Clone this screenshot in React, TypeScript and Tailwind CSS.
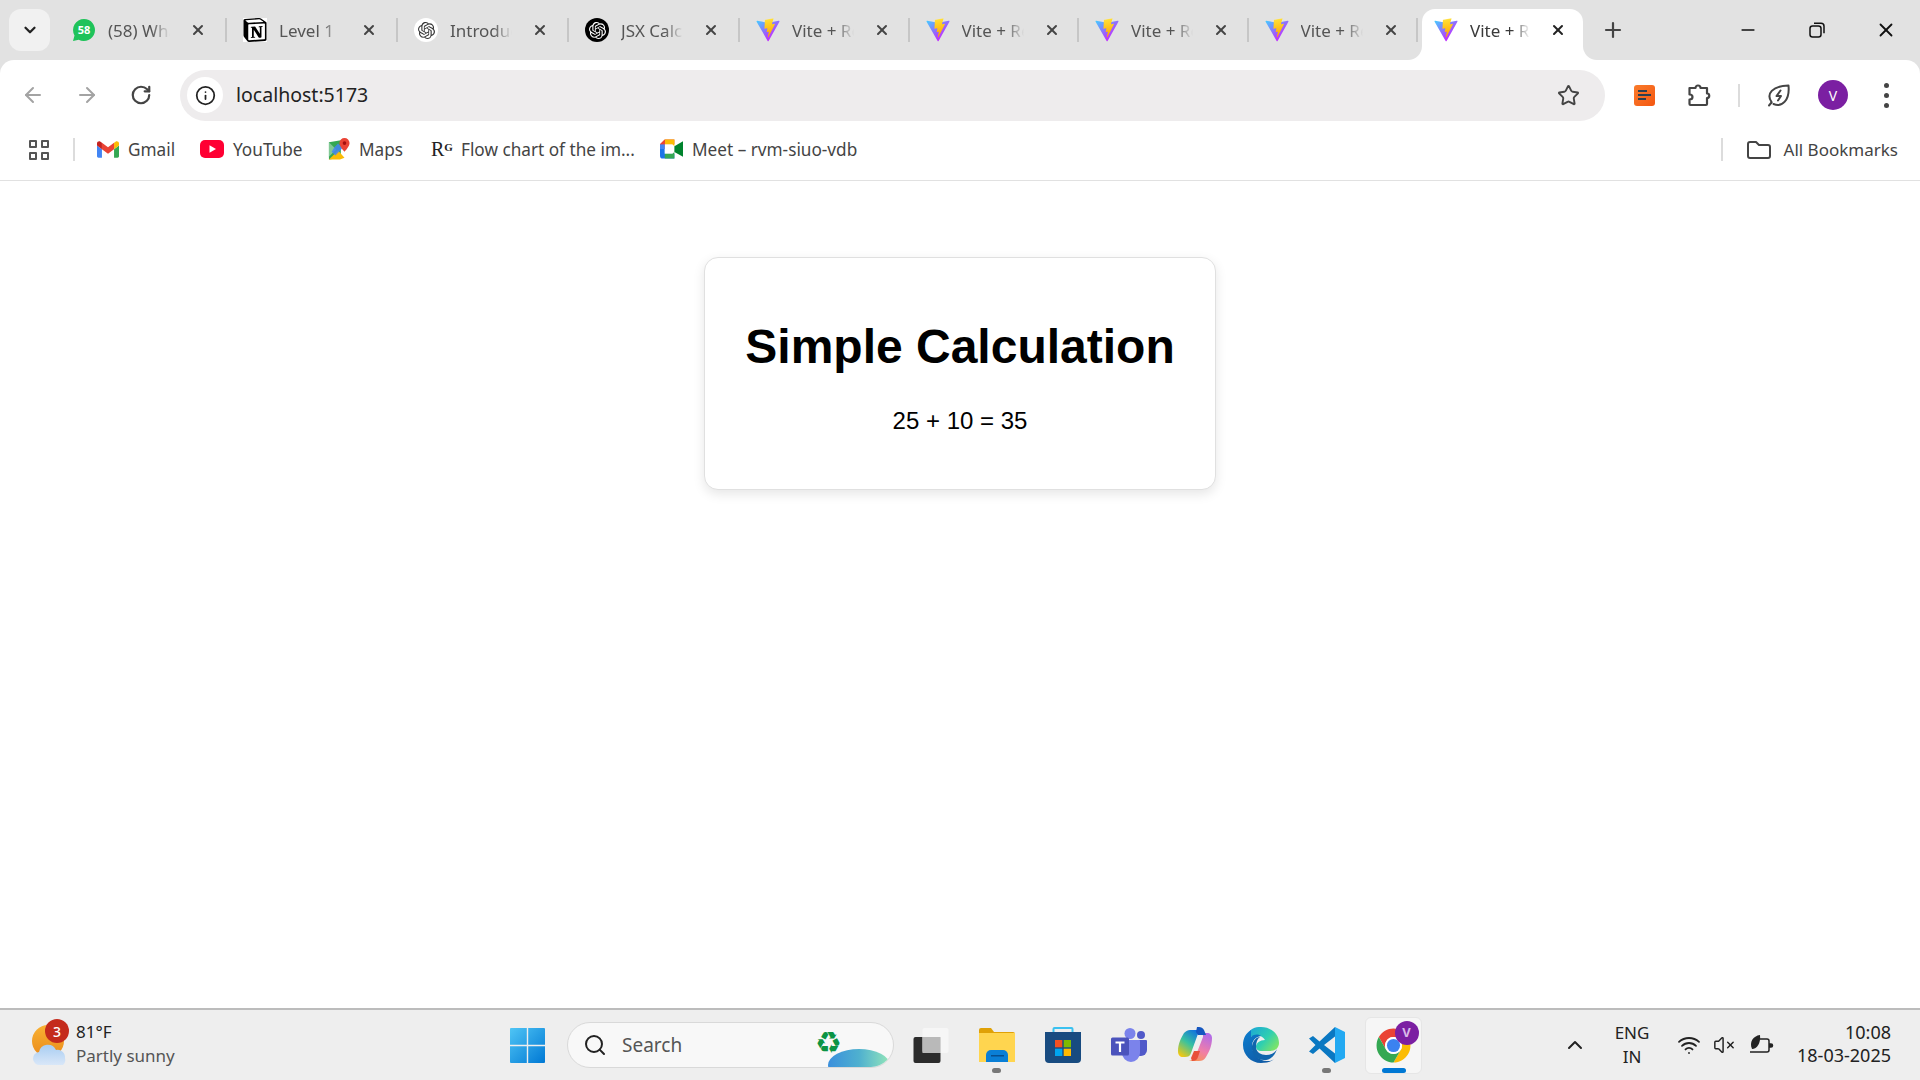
import { ArrowLeft, ArrowRight, ChevronDown, ChevronUp, Info, Minus, Plus, RotateCw, Search, Star, VolumeX, Wifi, X } from "lucide-react";
import { SiNotion, SiOpenai } from "react-icons/si";

function ViteIcon() {
  return (
    <svg viewBox="0 0 410 404" className="w-6 h-6 shrink-0" fill="none">
      <defs>
        <linearGradient id="vite-a" x1="6" y1="33" x2="235" y2="344" gradientUnits="userSpaceOnUse">
          <stop stopColor="#41D1FF" />
          <stop offset="1" stopColor="#BD34FE" />
        </linearGradient>
        <linearGradient id="vite-b" x1="194.65" y1="8.82" x2="236.08" y2="292.99" gradientUnits="userSpaceOnUse">
          <stop stopColor="#FFEA83" />
          <stop offset="0.083" stopColor="#FFDD35" />
          <stop offset="1" stopColor="#FFA800" />
        </linearGradient>
      </defs>
      <path d="M399.641 59.5246L215.643 388.545C211.844 395.338 202.084 395.378 198.228 388.618L10.5817 59.5563C6.38087 52.1896 12.6802 43.2665 21.0281 44.7586L205.223 77.6824C206.398 77.8924 207.601 77.8904 208.776 77.6763L389.119 44.8058C397.439 43.2894 403.768 52.1434 399.641 59.5246Z" fill="url(#vite-a)" />
      <path d="M292.965 1.5744L156.801 28.2552C154.563 28.6937 152.906 30.5903 152.771 32.8664L144.395 174.33C144.198 177.662 147.258 180.248 150.51 179.498L188.42 170.749C191.967 169.931 195.172 173.055 194.443 176.622L183.18 231.775C182.422 235.487 185.907 238.661 189.532 237.56L212.947 230.446C216.577 229.344 220.065 232.527 219.297 236.242L201.398 322.875C200.278 328.294 207.486 331.249 210.492 326.603L212.5 323.5L323.454 102.072C325.312 98.3645 322.108 94.137 318.036 94.9228L279.014 102.454C275.347 103.161 272.227 99.746 273.262 96.1583L298.731 7.86689C299.767 4.27314 296.636 0.855181 292.965 1.5744Z" fill="url(#vite-b)" />
    </svg>
  );
}

function WhatsAppIcon() {
  return (
    <div className="relative w-6 h-6 shrink-0">
      <svg viewBox="0 0 24 24" className="w-6 h-6">
        <path d="M12 1a11 11 0 1 1-5.2 20.7L1 23l1.500-5.500A11 11 0 0 1 12 1z" fill="#1fc35a" />
      </svg>
      <span className="absolute inset-0 flex items-center justify-center text-[11px] font-bold text-white">58</span>
    </div>
  );
}

function OpenAiIcon({ dark }: { dark?: boolean }) {
  return (
    <div className={dark ? "w-6 h-6 shrink-0 rounded-full bg-black text-white flex items-center justify-center" : "w-6 h-6 shrink-0 rounded-full bg-white text-[#333] flex items-center justify-center"}>
      <SiOpenai size={17} />
    </div>
  );
}

function Tab({ icon, title, className }: { icon: React.ReactNode; title: string; className: string }) {
  return (
    <div className={"flex items-center h-[42px] pl-4 " + className}>
      {icon}
      <span className="ml-3 pt-[2px] w-[62px] overflow-hidden whitespace-nowrap text-[17px] text-[#555] [mask-image:linear-gradient(to_right,black_70%,transparent)]">{title}</span>
      <X size={16} strokeWidth={3} className="ml-[20px] text-[#444]" />
      <div className="ml-auto w-[2px] h-6 bg-[#c6c6c6]" />
    </div>
  );
}

function ActiveTab() {
  return (
    <div className="relative flex items-center w-[161px] h-[51px] ml-1 pl-3 pb-[9px] bg-white rounded-t-[13px]">
      <div className="absolute -left-[14px] bottom-0 w-[14px] h-[14px] bg-white">
        <div className="w-full h-full bg-[#e2e2e2] rounded-br-[14px]" />
      </div>
      <div className="absolute -right-[14px] bottom-0 w-[14px] h-[14px] bg-white">
        <div className="w-full h-full bg-[#e2e2e2] rounded-bl-[14px]" />
      </div>
      <ViteIcon />
      <span className="ml-3 pt-[2px] w-[60px] overflow-hidden whitespace-nowrap text-[17px] text-[#3a3a3a] [mask-image:linear-gradient(to_right,black_70%,transparent)]">Vite + React</span>
      <X size={16} strokeWidth={3} className="ml-[20px] text-[#222]" />
    </div>
  );
}

function Bookmark({ icon, label, className, iconClassName }: { icon: React.ReactNode; label: string; className: string; iconClassName: string }) {
  return (
    <div className={"flex items-center shrink-0 " + className}>
      <div className={"shrink-0 flex items-center " + iconClassName}>{icon}</div>
      <span className="text-[17.2px] text-[#444] whitespace-nowrap">{label}</span>
    </div>
  );
}

function GmailIcon() {
  return (
    <svg viewBox="0 0 24 18" className="w-[22px] h-[17px]">
      <path d="M1.6 18h3.8V8.7L0 4.6v11.8c0 .9.7 1.6 1.6 1.6z" fill="#4285f4" />
      <path d="M18.6 18h3.8c.9 0 1.6-.7 1.6-1.6V4.6l-5.4 4.1z" fill="#34a853" />
      <path d="M18.6 1.7v7L24 4.6V2.4c0-2-2.3-3.1-3.8-1.9z" fill="#fbbc04" />
      <path d="M5.4 8.7v-7L12 6.6l6.6-4.9v7L12 13.6z" fill="#ea4335" />
      <path d="M0 2.4v2.2l5.4 4.1v-7L3.8.5C2.3-.7 0 .4 0 2.4z" fill="#c5221f" />
    </svg>
  );
}

function YouTubeIcon() {
  return (
    <svg viewBox="0 0 24 18" className="w-6 h-[18px]">
      <rect width="24" height="18" rx="5" fill="#ff0033" />
      <path d="M9.5 5.2l6.5 3.8-6.5 3.8z" fill="#fff" />
    </svg>
  );
}

function MapsIcon() {
  return (
    <svg viewBox="0 0 24 24" className="w-[22px] h-[22px]">
      <path d="M1 4.500l13-2v19l-13 2z" fill="#34a853" />
      <path d="M1 23.500l10-10 7 8-5 2z" fill="#fbbc04" />
      <path d="M1 4.500l8 8-8 8z" fill="#81c995" />
      <path d="M7 10l4-4 5 5-8 8-4-4z" fill="#4285f4" opacity="0.85" />
      <path d="M18 0a5.500 5.500 0 0 1 5.500 5.500c0 4-5.500 9.500-5.500 9.500s-5.500-5.500-5.500-9.500A5.500 5.500 0 0 1 18 0z" fill="#ea4335" />
      <circle cx="18" cy="5.500" r="2" fill="#a50e0e" />
    </svg>
  );
}

function MeetIcon() {
  return (
    <svg viewBox="0 0 24 20" className="w-[23px] h-[20px]">
      <path d="M5 0h10v5H5v5H0V5z" fill="#ea4335" />
      <path d="M0 10h5v5h10v5H3a3 3 0 0 1-3-3z" fill="#1a73e8" />
      <path d="M5 5h8l2 2v6l-2 2H5z" fill="#fff" />
      <path d="M15 0v7l-2-2H5V0z" fill="#fbbc04" />
      <path d="M15 13v7H5v-5h8z" fill="#34a853" />
      <path d="M15 7l9-5v16l-9-5z" fill="#00832d" />
      <path d="M0 5h5v5H0z" fill="#4285f4" />
      <path d="M5 0L0 5h5z" fill="#ea4335" />
    </svg>
  );
}

function ChromeIcon() {
  return (
    <svg viewBox="0 0 48 48" className="w-[37px] h-[37px]">
      <path d="M4.95 13A22 22 0 0 1 43.05 13H24A11 11 0 0 0 14.47 29.5z" fill="#ea4335" />
      <path d="M43.05 13A22 22 0 0 1 24 46L33.53 29.5A11 11 0 0 0 24 13z" fill="#fbbc04" />
      <path d="M24 46A22 22 0 0 1 4.95 13L14.47 29.5A11 11 0 0 0 33.53 29.5z" fill="#34a853" />
      <circle cx="24" cy="24" r="11" fill="#fff" />
      <circle cx="24" cy="24" r="8.500" fill="#3b82f0" />
    </svg>
  );
}

function WindowsLogo() {
  return (
    <svg viewBox="0 0 35 35" className="w-[35px] h-[35px] shrink-0">
      <defs>
        <linearGradient id="win" x1="0" y1="0" x2="1" y2="1">
          <stop stopColor="#4fc5f5" />
          <stop offset="1" stopColor="#0078d4" />
        </linearGradient>
      </defs>
      <path d="M1 0h15.800v16.800H0V1a1 1 0 0 1 1-1zM18.200 0H34a1 1 0 0 1 1 1v15.800H18.200zM0 18.200h16.800V35H1a1 1 0 0 1-1-1zM18.200 18.200H35V34a1 1 0 0 1-1 1H18.200z" fill="url(#win)" />
    </svg>
  );
}

function StackIcon() {
  return (
    <svg viewBox="0 0 36 36" className="w-9 h-9">
      <rect x="0.500" y="10" width="27" height="26" rx="2" fill="#2b2b2b" />
      <rect x="9.500" y="1" width="26" height="25" rx="2" fill="#f6f6f6" opacity="0.9" />
      <rect x="9.500" y="10" width="18" height="16" fill="#b9b9b9" />
    </svg>
  );
}

function FolderIcon() {
  return (
    <svg viewBox="0 0 36 34" className="w-9 h-[34px]">
      <path d="M0 2a2 2 0 0 1 2-2h10l3 4h19a2 2 0 0 1 2 2v4H0z" fill="#e0a106" />
      <path d="M0 5h36v29H0z" fill="#ffd54f" />
      <path d="M7 33v-6a5 5 0 0 1 5-5h12a5 5 0 0 1 5 5v7H7z" fill="#0a7fd6" />
      <rect x="12" y="27" width="13" height="1.500" fill="#064f8f" />
    </svg>
  );
}

function StoreIcon() {
  return (
    <svg viewBox="0 0 36 36" className="w-9 h-9">
      <path d="M8.500 7V2a1 1 0 0 1 1-1h17a1 1 0 0 1 1 1v5" fill="none" stroke="#3ac1f0" strokeWidth="2" />
      <path d="M0 5h36v27a4 4 0 0 1-4 4H4a4 4 0 0 1-4-4z" fill="#184b80" />
      <rect x="10" y="13" width="7.300" height="7.300" fill="#f25022" />
      <rect x="18.700" y="13" width="7.300" height="7.300" fill="#7fba00" />
      <rect x="10" y="21.700" width="7.300" height="7.300" fill="#00a4ef" />
      <rect x="18.700" y="21.700" width="7.300" height="7.300" fill="#ffb900" />
    </svg>
  );
}

function TeamsIcon() {
  return (
    <svg viewBox="0 0 36 34" className="w-9 h-[34px]">
      <circle cx="19" cy="5.500" r="5.500" fill="#7b83eb" />
      <circle cx="30" cy="7" r="4" fill="#5059c9" />
      <path d="M25 12h10a1 1 0 0 1 1 1v9a6 6 0 0 1-6 6h-4z" fill="#5059c9" />
      <path d="M10 12h18a1 1 0 0 1 1 1v12a9 9 0 0 1-18 0z" fill="#7b83eb" />
      <rect x="0" y="9.500" width="18" height="18" rx="1.500" fill="#4b53bc" />
      <path d="M4.500 13.500h9v2h-3.400v8.500H7.900v-8.500H4.500z" fill="#fff" />
    </svg>
  );
}

function CopilotIcon() {
  return (
    <svg viewBox="0 0 36 36" className="w-9 h-9">
      <defs>
        <linearGradient id="cop-a" x1="0.800" y1="0" x2="0.200" y2="1">
          <stop stopColor="#0f6fe0" />
          <stop offset="0.500" stopColor="#37c2a0" />
          <stop offset="1" stopColor="#f2c811" />
        </linearGradient>
        <linearGradient id="cop-b" x1="0.700" y1="0" x2="0.300" y2="1">
          <stop stopColor="#b26be8" />
          <stop offset="0.600" stopColor="#f07ea8" />
          <stop offset="1" stopColor="#f7935a" />
        </linearGradient>
      </defs>
      <path d="M13 3h10l-1 1-8 22c-1 3-3 4-6 4H6C3 30 1 28 1 24c0-7 3-13 6-18 2-2 4-3 6-3z" fill="url(#cop-a)" />
      <path d="M23 6h7c3 0 5 2 5 5 0 8-3 14-6 19-2 3-4 4-7 4H12l3-1c2-1 3-2 4-5l7-18c.5-2-1-4-3-4z" fill="url(#cop-b)" />
      <path d="M20 0h2c2 0 4 1 5 3l2 5h-8l-2-3z" fill="#1557c0" />
      <path d="M15 34c3 0 5-1 6-4l2-6h-6l-3 7z" fill="#e8503a" />
    </svg>
  );
}

function EdgeIcon() {
  return (
    <svg viewBox="0 0 36 36" className="w-9 h-9">
      <defs>
        <linearGradient id="edge-a" x1="0" y1="0" x2="1" y2="0.700">
          <stop stopColor="#1ba5d8" />
          <stop offset="0.600" stopColor="#2fcfb0" />
          <stop offset="1" stopColor="#7be36a" />
        </linearGradient>
        <linearGradient id="edge-b" x1="0" y1="0" x2="0.700" y2="1">
          <stop stopColor="#0c7ed0" />
          <stop offset="1" stopColor="#0f5aa5" />
        </linearGradient>
      </defs>
      <path d="M18 0c10 0 18 7 18 16 0 5-4 8-9 8h-9c-3 0-5-2-5-4 0-4 4-7 9-7-2-4-8-6-14-3C4 3 10 0 18 0z" fill="url(#edge-a)" />
      <path d="M8 10c3-3 7-3 10-1-6 1-9 5-9 10 0 8 7 15 15 15 3 0 5-.5 7-2-3 3-8 4-13 4C8 36 0 28 0 18 0 11 3 6 8 3z" fill="url(#edge-b)" />
      <path d="M13 20c0 5 5 8 10 8 5 0 9-2 11-6-2 7-7 11-13 11-8 0-13-7-12-14 1-5 4-9 8-9-3 2-4 6-4 10z" fill="#1065ad" />
    </svg>
  );
}

function VsCodeIcon() {
  return (
    <svg viewBox="0 0 36 36" className="w-9 h-9">
      <path d="M26 0l10 5v26l-10 5z" fill="#23a9f2" />
      <path d="M26 0v9.500L15 18l11 8.500V36L10.500 21.500 4 27 0 24.500 6.500 18 0 11.500 4 9l6.500 5.500z" fill="#0a78c2" />
    </svg>
  );
}

function WeatherIcon() {
  return (
    <div className="relative w-[38px] h-[44px] shrink-0">
      <svg viewBox="0 0 38 44" className="w-[38px] h-[44px]">
        <defs>
          <linearGradient id="sun" x1="0" y1="0" x2="0" y2="1">
            <stop stopColor="#f9b233" />
            <stop offset="1" stopColor="#ea8a1a" />
          </linearGradient>
          <linearGradient id="cloud" x1="0" y1="0" x2="0" y2="1">
            <stop stopColor="#a8cdf2" />
            <stop offset="1" stopColor="#d9e7f8" />
          </linearGradient>
        </defs>
        <circle cx="16" cy="18" r="16" fill="url(#sun)" />
        <path d="M8 42a6.500 6.500 0 0 1-1-13 9 9 0 0 1 17-2 7.500 7.500 0 0 1 9 8 7 7 0 0 1-2 7z" fill="url(#cloud)" />
      </svg>
      <span className="absolute -top-[4px] left-[13px] w-6 h-6 rounded-full bg-[#c42b1c] text-white text-[14px] font-medium flex items-center justify-center">3</span>
    </div>
  );
}

function TaskIcon({ children, dot }: { children: React.ReactNode; dot?: boolean }) {
  return (
    <div className="relative w-[66px] h-[70px] shrink-0 flex items-center justify-center">
      {children}
      {dot && <div className="absolute bottom-[7px] left-[28px] w-[9px] h-[5px] rounded-full bg-[#777]" />}
    </div>
  );
}

export default function App() {
  return (
    <div className="h-screen w-full flex flex-col overflow-hidden bg-white font-['Noto_Sans',sans-serif]">
      {/* Tab strip */}
      <div className="bg-[#e2e2e2] shrink-0">
        <div className="flex items-end h-[60px] pl-[9px]">
          <div className="w-[41px] h-[42px] mb-[9px] rounded-[12px] bg-[#f1f1f1] flex items-center justify-center">
            <ChevronDown size={18} strokeWidth={3} className="text-[#222]" />
          </div>
          <div className="flex items-center ml-[6px] mb-[9px]">
            <Tab className="w-[171px]" icon={<WhatsAppIcon />} title="(58) WhatsApp" />
            <Tab
              className="w-[171px]"
              icon={
                <div className="w-6 h-6 shrink-0 bg-white text-black">
                  <SiNotion size={24} />
                </div>
              }
              title="Level 1"
            />
            <Tab className="w-[171px]" icon={<OpenAiIcon />} title="Introduction" />
            <Tab className="w-[171px]" icon={<OpenAiIcon dark />} title="JSX Calculator" />
            <Tab className="w-[169.5px]" icon={<ViteIcon />} title="Vite + React" />
            <Tab className="w-[169.5px]" icon={<ViteIcon />} title="Vite + React" />
            <Tab className="w-[169.5px]" icon={<ViteIcon />} title="Vite + React" />
            <Tab className="w-[169.5px]" icon={<ViteIcon />} title="Vite + React" />
          </div>
          <ActiveTab />
          <Plus size={24} strokeWidth={2.2} className="ml-[18px] mb-[18px] text-[#444]" />
          <div className="ml-auto flex items-center h-[60px]">
            <div className="w-[69px] flex justify-center">
              <Minus size={20} strokeWidth={2} className="text-[#111]" />
            </div>
            <div className="w-[69px] flex justify-center">
              <svg viewBox="0 0 16 16" className="w-4 h-4" fill="none" stroke="#111" strokeWidth="1.500">
                <rect x="1" y="4" width="11" height="11" rx="2.500" />
                <path d="M5 1.200h7a3 3 0 0 1 3 3v7" />
              </svg>
            </div>
            <div className="w-[69px] flex justify-center">
              <X size={22} strokeWidth={2} className="text-[#111]" />
            </div>
          </div>
        </div>

        {/* Toolbar */}
        <div className="bg-white rounded-t-[14px]">
          <div className="flex items-center h-[70px] pl-[6px]">
            <div className="w-[54px] flex justify-center"><ArrowLeft size={24} strokeWidth={2} className="text-[#a3a3a3]" /></div>
            <div className="w-[54px] flex justify-center"><ArrowRight size={24} strokeWidth={2} className="text-[#a3a3a3]" /></div>
            <div className="w-[54px] flex justify-center"><RotateCw size={22} strokeWidth={2.4} className="text-[#444]" /></div>
            <div className="ml-3 w-[1425px] h-[51px] rounded-full bg-[#eeeced] flex items-center pl-[7px] pr-[25px]">
              <div className="w-9 h-9 rounded-full bg-white flex items-center justify-center">
                <Info size={21} strokeWidth={2} className="text-[#222]" />
              </div>
              <span className="ml-[13px] text-[19.5px] text-[#222]">localhost:5173</span>
              <Star size={23} strokeWidth={2} className="ml-auto text-[#444]" />
            </div>
            <div className="ml-[29px] w-[21px] h-[21px] rounded-[3px] bg-gradient-to-br from-[#f97b2b] to-[#f4560f] flex flex-col justify-center gap-[2px] px-[4px]">
              <div className="h-[2px] w-[9px] bg-[#2d3f50]" />
              <div className="h-[2px] w-[13px] bg-[#2d3f50]" />
              <div className="h-[2px] w-[8px] bg-[#2d3f50]" />
            </div>
            <svg viewBox="0 0 24 24" className="ml-[32px] w-6 h-6" fill="none" stroke="#444" strokeWidth="2.2" strokeLinejoin="round">
              <path d="M2.500 5h6a2.500 2.500 0 0 1 5 0H20v5.500a2.200 2.200 0 0 1 0 4.500V21a1 1 0 0 1-1 1H3.500a1 1 0 0 1-1-1v-4.500c1.800 0 3-1 3-2.500s-1.200-2.500-3-2.500z" />
            </svg>
            <div className="ml-[27px] w-[2px] h-[23px] bg-[#dcdcdc]" />
            <svg viewBox="0 0 24 24" className="ml-[27px] w-6 h-6" fill="none" stroke="#444" strokeWidth="2" strokeLinejoin="round" strokeLinecap="round">
              <path d="M4.500 19C-1 11 5 3 21.500 2.500c1.500 15-6.500 22-15 18.500" />
              <path d="M13.500 7.500L9.500 13h4.500l-3 4.500" />
              <path d="M2 22.500l2.500-3" />
            </svg>
            <div className="ml-[27px] w-[30px] h-[30px] rounded-full bg-[#7b1fa2] text-white text-[14px] flex items-center justify-center">V</div>
            <div className="ml-[36px] flex flex-col gap-[5px]">
              <div className="w-[5px] h-[5px] rounded-full bg-[#444]" />
              <div className="w-[5px] h-[5px] rounded-full bg-[#444]" />
              <div className="w-[5px] h-[5px] rounded-full bg-[#444]" />
            </div>
          </div>

          {/* Bookmarks bar */}
          <div className="flex items-center h-[51px] pb-[11px] pl-[29px] border-b border-[#e1e1e1]">
            <div className="grid grid-cols-2 gap-[4px] w-5 h-5 shrink-0">
              <div className="border-2 border-[#555] rounded-[1px]" />
              <div className="border-2 border-[#555] rounded-[1px]" />
              <div className="border-2 border-[#555] rounded-[1px]" />
              <div className="border-2 border-[#555] rounded-[1px]" />
            </div>
            <div className="ml-6 w-[2px] h-[23px] bg-[#dcdcdc]" />
            <div className="ml-[22px] flex items-center">
              <Bookmark className="w-[103px]" iconClassName="w-[31px]" icon={<GmailIcon />} label="Gmail" />
              <Bookmark className="w-[128px]" iconClassName="w-[33px]" icon={<YouTubeIcon />} label="YouTube" />
              <Bookmark className="w-[103px]" iconClassName="w-[31px]" icon={<MapsIcon />} label="Maps" />
              <Bookmark
                className="w-[229px]"
                iconClassName="w-[30px]"
                icon={
                  <span className="font-['Liberation_Serif',serif] text-[20px] text-[#222] leading-none">
                    R<sup className="text-[11px] font-bold">G</sup>
                  </span>
                }
                label="Flow chart of the im..."
              />
              <Bookmark className="w-[200px]" iconClassName="w-[32px]" icon={<MeetIcon />} label="Meet – rvm-siuo-vdb" />
            </div>
            <div className="ml-auto flex items-center pr-[22px]">
              <div className="w-[2px] h-[23px] bg-[#dcdcdc]" />
              <svg viewBox="0 0 24 18" className="ml-6 w-6 h-[18px]" fill="none" stroke="#444" strokeWidth="2" strokeLinejoin="round">
                <path d="M1 3a2 2 0 0 1 2-2h6l3 3h9a2 2 0 0 1 2 2v9a2 2 0 0 1-2 2H3a2 2 0 0 1-2-2z" />
              </svg>
              <span className="ml-[13px] text-[17px] text-[#444] whitespace-nowrap">All Bookmarks</span>
            </div>
          </div>
        </div>
      </div>

      {/* Page */}
      <main className="flex-1 bg-white pt-[76px] font-['Liberation_Sans',Arial,sans-serif] text-black">
        <div className="mx-auto w-[512px] h-[233px] px-10 text-center bg-white border border-[#e0e0e0] rounded-[14px] shadow-[0_4px_12px_rgba(0,0,0,0.1)]">
          <h1 className="mt-[61px] text-[48px] leading-[55px] font-bold whitespace-nowrap">Simple Calculation</h1>
          <p className="mt-[33px] text-[24px] leading-[28px]">25 + 10 = 35</p>
        </div>
      </main>

      {/* Taskbar */}
      <footer className="shrink-0 h-[72px] border-t-2 border-[#bcbcbc] bg-[#eeeeee] flex items-center">
        <div className="w-[510px] shrink-0 pl-[32px] flex items-center">
          <WeatherIcon />
          <div className="ml-[6px] flex flex-col -mt-[2px]">
            <span className="text-[17px] leading-[24px] text-[#222]">81°F</span>
            <span className="text-[17px] leading-[24px] text-[#555]">Partly sunny</span>
          </div>
        </div>
        <WindowsLogo />
        <div className="ml-[22px] w-[327px] h-[46px] shrink-0 rounded-full bg-[#f8f8f8] border border-[#d9d9d9] relative flex items-center pl-[15px] overflow-hidden">
          <Search size={24} strokeWidth={2} className="text-[#222]" />
          <span className="ml-[15px] text-[19px] text-[#555]">Search</span>
          <span className="absolute left-[247px] top-[5px] font-['DejaVu_Sans',sans-serif] text-[30px] leading-[30px] text-[#0b9444]">♻</span>
          <div className="absolute left-[260px] top-[26px] w-[62px] h-[32px] rounded-[50%] bg-gradient-to-r from-[#3b8fdc] via-[#4fb0cf] to-[#93e6b8]" />
        </div>
        <div className="ml-[4px] flex items-center">
          <TaskIcon><StackIcon /></TaskIcon>
          <TaskIcon dot><FolderIcon /></TaskIcon>
          <TaskIcon><StoreIcon /></TaskIcon>
          <TaskIcon><TeamsIcon /></TaskIcon>
          <TaskIcon><CopilotIcon /></TaskIcon>
          <TaskIcon><EdgeIcon /></TaskIcon>
          <TaskIcon dot><VsCodeIcon /></TaskIcon>
          <TaskIcon>
            <div className="relative w-[57px] h-[57px] rounded-[6px] bg-[#f6f6f6] border border-[#e6e6e6] flex items-center justify-center">
              <ChromeIcon />
              <span className="absolute top-[3px] right-[2px] w-6 h-6 rounded-full bg-[#7b1fa2] text-[#d9b8e8] text-[13px] font-bold flex items-center justify-center">V</span>
              <div className="absolute bottom-0 left-[16px] w-6 h-[5px] rounded-full bg-[#0078d4]" />
            </div>
          </TaskIcon>
        </div>
        <div className="ml-auto w-[359px] shrink-0 flex items-center text-[#222]">
          <div className="w-[28px] flex justify-center"><ChevronUp size={24} strokeWidth={2} /></div>
          <div className="ml-[13px] w-[60px] text-center text-[17px] leading-[24px]">
            <div>ENG</div>
            <div>IN</div>
          </div>
          <div className="ml-3 w-[30px] flex justify-center"><Wifi size={24} strokeWidth={1.8} /></div>
          <div className="ml-[5px] w-[30px] flex justify-center"><VolumeX size={22} strokeWidth={1.6} /></div>
          <div className="ml-[7px] w-[30px] flex justify-center">
            <svg viewBox="0 0 26 22" className="w-[26px] h-[22px]" fill="none" stroke="#222" strokeWidth="1.500">
              <path d="M12 5h7a2 2 0 0 1 2 2v9a2 2 0 0 1-2 2H2" />
              <path d="M21 10h2a1 1 0 0 1 0 3h-2" fill="#222" />
              <path d="M12 1C5 2 1 8 4 15c5 0 9-6 8-14z" fill="#222" stroke="none" />
            </svg>
          </div>
          <div className="ml-auto pr-[29px] text-right text-[18px] leading-[23px] -mt-[2px]">
            <div>10:08</div>
            <div>18-03-2025</div>
          </div>
        </div>
      </footer>
    </div>
  );
}
